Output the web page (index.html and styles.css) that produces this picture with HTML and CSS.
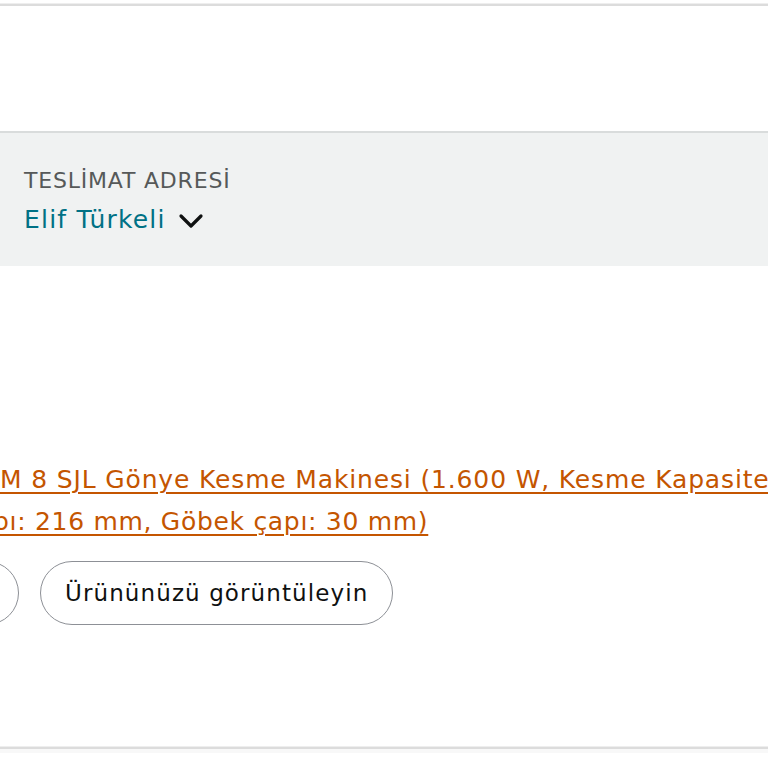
FILE: index.html
```html
<!DOCTYPE html>
<html lang="tr">
<head>
<meta charset="utf-8">
<link rel="stylesheet" href="styles.css">
</head>
<body>
<div class="page">
  <div class="top-rule"></div>
  <div class="top-space"></div>
  <section class="address">
    <div class="address-label">TESLİMAT ADRESİ</div>
    <div class="address-name">
      <span class="name">Elif Türkeli</span>
      <svg class="chev" width="26" height="18" viewBox="0 0 26 18"><path d="M3 4 L13 14 L23 4" fill="none" stroke="#0f1111" stroke-width="3.2" stroke-linecap="round" stroke-linejoin="round"/></svg>
    </div>
  </section>
  <section class="product">
    <div class="status"><span class="status-text">a</span></div>
    <a class="title" href="#"><span class="line1">M 8 SJL Gönye Kesme Makinesi (1.600 W, Kesme Kapasitesi</span><br><span class="line2">pı: 216 mm, Göbek çapı: 30 mm)</span></a>
    <div class="actions">
      <button class="pill pill-cut">Tekrar satın alın</button>
      <button class="pill">Ürününüzü görüntüleyin</button>
    </div>
  </section>
  <div class="bottom-rule"></div>
</div>
</body>
</html>
```
FILE: styles.css
```css
html, body {
  margin: 0;
  padding: 0;
  background: #ffffff;
  overflow: hidden;
}
body {
  font-family: "DejaVu Sans", "Noto Sans", sans-serif;
  color: #0f1111;
  width: 768px;
  height: 768px;
}
.page {
  display: flex;
  flex-direction: column;
}
.top-rule {
  margin-top: 3px;
  height: 1px;
  background: #eeeeee;
  border-bottom: 2px solid #dcdcdc;
}
.top-space {
  height: 125px;
  border-bottom: 2px solid #d9dcdc;
}
.address {
  background: #f0f2f2;
  height: 133px;
  box-sizing: border-box;
  padding: 34px 0 0 24px;
  display: flex;
  flex-direction: column;
}
.address-label {
  font-size: 22px;
  line-height: 28px;
  color: #565959;
  letter-spacing: 0.8px;
}
.address-name {
  display: flex;
  align-items: center;
  gap: 12px;
  margin-top: 8px;
}
.name {
  font-size: 25px;
  line-height: 34px;
  color: #007185;
  letter-spacing: 1.2px;
}
.chev {
  display: block;
  margin-top: 2px;
}
.product {
  display: flex;
  flex-direction: column;
  height: 480px;
}
.status {
  margin-top: 92px;
  margin-left: -15px;
  font-size: 24px;
  line-height: 32px;
  font-weight: 700;
  height: 32px;
  overflow: hidden;
}
.title {
  margin-top: 69px;
  margin-left: -7px;
  text-indent: 7px;
  font-size: 25px;
  line-height: 42px;
  color: #c45500;
  letter-spacing: 0.7px;
  text-decoration: underline;
  text-underline-offset: 4px;
  text-decoration-thickness: 1.5px;
  white-space: nowrap;
}
.line1 {
  letter-spacing: 0.85px;
}
.actions {
  display: flex;
  gap: 21px;
  margin-top: 18px;
  margin-left: -290px;
}
.pill {
  font-family: inherit;
  font-size: 23px;
  letter-spacing: 1.1px;
  color: #0f1111;
  background: #ffffff;
  border: 1.5px solid #8d9096;
  border-radius: 40px;
  height: 64px;
  padding: 0 24px;
  white-space: nowrap;
}
.pill-cut {
  width: 309px;
  overflow: hidden;
}
.bottom-rule {
  height: 2px;
  background: #dcdcdc;
  border-top: 1px solid #eeeeee;
  border-bottom: 4px solid #f8f8f8;
}
```
